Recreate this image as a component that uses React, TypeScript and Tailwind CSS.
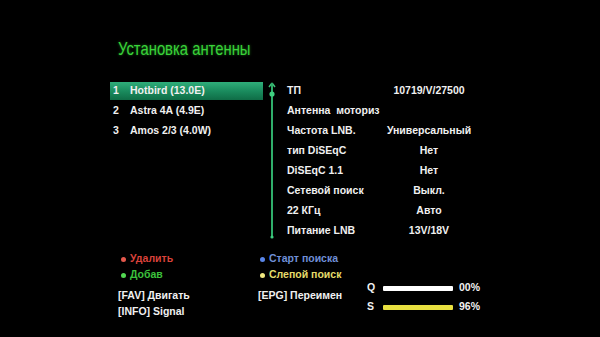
const satellites = [
  { n: 1, name: "Hotbird (13.0E)" },
  { n: 2, name: "Astra 4A (4.9E)" },
  { n: 3, name: "Amos 2/3 (4.0W)" },
];

const params = [
  { label: "ТП", value: "10719/V/27500" },
  { label: "Антенна  моториз", value: "" },
  { label: "Частота LNB.", value: "Универсальный" },
  { label: "тип DiSEqC", value: "Нет" },
  { label: "DiSEqC 1.1", value: "Нет" },
  { label: "Сетевой поиск", value: "Выкл." },
  { label: "22 КГц", value: "Авто" },
  { label: "Питание LNB", value: "13V/18V" },
];

function Scrollbar() {
  return (
    <svg width="8" height="158" viewBox="0 0 8 158" className="block">
      <path d="M4 1 L1 5 M4 1 L7 5" stroke="#3fbf78" strokeWidth="1.5" fill="none" />
      <line x1="4" y1="1" x2="4" y2="155" stroke="#2fae6a" strokeWidth="2" />
      <circle cx="4" cy="12" r="2.6" fill="#3fcf80" />
      <circle cx="4" cy="155" r="1.6" fill="#3fcf80" />
    </svg>
  );
}

export default function App() {
  return (
    <div
      className="w-[600px] h-[337px] bg-black overflow-hidden text-[#f0f0f0]"
      style={{ fontFamily: "'Liberation Sans', Arial, sans-serif" }}
    >
      {/* Title */}
      <div className="pl-[118px] pt-[38px] h-[60px]">
        <div
          className="inline-block origin-left scale-x-[0.78] text-[19px] leading-[22px] text-[#3ad23a]"
          style={{ textShadow: "0 0 3px rgba(40,200,40,0.6)" }}
        >
          Установка антенны
        </div>
      </div>

      {/* Main area */}
      <div className="flex mt-[21px] h-[160px]">
        <div className="ml-[110px] w-[153px] flex flex-col">
          {satellites.map((s, i) => (
            <div key={s.n} className="h-[20px] flex items-center">
              <div
                className={`w-full h-[18px] flex items-center text-[10.5px] font-bold ${
                  i === 0 ? "bg-gradient-to-b from-[#2fae7a] via-[#1a8c5e] to-[#0f6c46]" : ""
                }`}
              >
                <span className="w-[20px] pl-[3px]">{s.n}</span>
                <span>{s.name}</span>
              </div>
            </div>
          ))}
        </div>

        <div className="ml-[5px] pt-[1px]">
          <Scrollbar />
        </div>

        <div className="ml-[11px] flex flex-col">
          {params.map((p) => (
            <div key={p.label} className="h-[20px] flex items-center text-[10.5px] font-bold">
              <span className="w-[93px] whitespace-pre">{p.label}</span>
              <span className="w-[98px] text-center">{p.value}</span>
            </div>
          ))}
        </div>
      </div>

      {/* Bottom help + signal */}
      <div className="flex mt-[10px] text-[10.5px] font-bold">
        <div className="ml-[118px] w-[140px] flex flex-col">
          <div className="h-[16px] flex items-center text-[#d9423a]">
            <span className="ml-[3px] mr-[4px] w-[5px] h-[5px] rounded-full bg-[#e4584c]" />
            Удалить
          </div>
          <div className="h-[16px] flex items-center text-[#3cc23c]">
            <span className="ml-[3px] mr-[4px] w-[5px] h-[5px] rounded-full bg-[#52d852]" />
            Добав
          </div>
          <div className="mt-[5px] h-[16px] flex items-center">[FAV] Двигать</div>
          <div className="h-[16px] flex items-center">[INFO] Signal</div>
        </div>

        <div className="w-[109px] flex flex-col">
          <div className="h-[16px] flex items-center text-[#6f8fd6]">
            <span className="ml-[2px] mr-[4px] w-[5px] h-[5px] rounded-full bg-[#5a86e8]" />
            Старт поиска
          </div>
          <div className="h-[16px] flex items-center text-[#e4dc6a]">
            <span className="ml-[2px] mr-[4px] w-[5px] h-[5px] rounded-full bg-[#f0e880]" />
            Слепой поиск
          </div>
          <div className="mt-[5px] h-[16px] flex items-center">[EPG] Переимен</div>
        </div>

        <div className="pt-[29px] flex flex-col gap-[3px]">
          <div className="h-[16px] flex items-center">
            <span className="w-[16px]">Q</span>
            <span className="w-[70px] h-[5px] bg-white rounded-[1px]" />
            <span className="ml-[6px]">00%</span>
          </div>
          <div className="h-[16px] flex items-center">
            <span className="w-[16px]">S</span>
            <span className="w-[70px] h-[5px] bg-[#e8e040] rounded-[1px]" />
            <span className="ml-[6px]">96%</span>
          </div>
        </div>
      </div>
    </div>
  );
}
